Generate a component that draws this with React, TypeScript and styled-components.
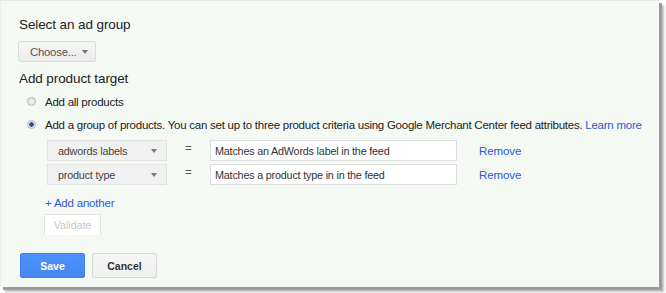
import React from "react";
import styled, { createGlobalStyle } from "styled-components";

const Global = createGlobalStyle`
  html, body { margin: 0; padding: 0; background: #ffffff; }
  body { font-family: Arial, "Liberation Sans", sans-serif; color: #222; }
`;

const Frame = styled.div`
  width: 666px;
  height: 293px;
  background: #fff;
`;

const Panel = styled.div`
  box-sizing: border-box;
  width: 659px;
  height: 287px;
  background: #f5f9f4;
  border-top: 1px solid #e6e9e5;
  border-left: 1px solid #eceeeb;
  box-shadow: 3px 3px 0 0 #9a9a9a, 5px 5px 2px 0 #bdbdbd;
  padding: 15px 0 0 17px;
  display: flex;
  flex-direction: column;
  align-items: flex-start;
`;

const Heading = styled.div<{ $gap?: number }>`
  font-size: 13.5px;
  letter-spacing: -0.1px;
  line-height: 17px;
  color: #222;
  margin: ${(p) => p.$gap ?? 0}px 0 0 1px;
`;

const ChooseButton = styled.div`
  box-sizing: border-box;
  margin-top: 8px;
  width: 78px;
  height: 21px;
  border: 1px solid #dcdcdc;
  border-radius: 2px;
  background: linear-gradient(#f5f5f5, #ededed);
  color: #555;
  font-size: 11.3px;
  letter-spacing: -0.2px;
  display: flex;
  align-items: center;
  padding-left: 11px;
  gap: 5px;
`;

const Arrow = styled.span`
  width: 0;
  height: 0;
  border-left: 3px solid transparent;
  border-right: 3px solid transparent;
  border-top: 4px solid #777;
`;

const Options = styled.div`
  display: flex;
  flex-direction: column;
  align-items: flex-start;
  padding-left: 9px;
  margin-top: 3px;
`;

const OptionRow = styled.label`
  display: flex;
  align-items: center;
  font-size: 11.5px;
  letter-spacing: -0.25px;
  height: 23px;
  color: #222;
  white-space: nowrap;
`;

const Radio = styled.span<{ $on?: boolean }>`
  box-sizing: border-box;
  width: 9px;
  height: 9px;
  border-radius: 50%;
  border: 1px solid #b8b8b8;
  background: ${(p) =>
    p.$on
      ? "radial-gradient(circle, #2a4f9a 0 2px, #dfe5ee 2.5px)"
      : "radial-gradient(circle, #f3f3f3, #dadada)"};
  margin-right: 9px;
`;

const Link = styled.a`
  color: #2a5bd7;
  text-decoration: none;
  cursor: pointer;
`;

const Criteria = styled.div`
  display: flex;
  flex-direction: column;
  gap: 3px;
  padding-left: 20px;
  margin-top: 4px;
`;

const CriteriaRow = styled.div`
  display: flex;
  align-items: center;
  height: 21px;
`;

const Select = styled.div`
  box-sizing: border-box;
  width: 120px;
  height: 21px;
  border: 1px solid #e2e2e2;
  background: #f1f1f1;
  color: #444;
  font-size: 10.8px;
  letter-spacing: -0.2px;
  display: flex;
  align-items: center;
  justify-content: space-between;
  padding: 0 9px 0 10px;
`;

const Equals = styled.span`
  width: 43px;
  text-align: center;
  color: #555;
  font-size: 11px;
  margin-top: -6px;
`;

const Input = styled.div`
  box-sizing: border-box;
  width: 247px;
  height: 21px;
  border: 1px solid #dedede;
  background: #fff;
  color: #333;
  font-size: 10.8px;
  letter-spacing: -0.2px;
  display: flex;
  align-items: center;
  padding-left: 4px;
`;

const Remove = styled(Link)`
  font-size: 11.5px;
  letter-spacing: -0.1px;
  margin-left: 22px;
`;

const AddAnother = styled(Link)`
  font-size: 11.5px;
  letter-spacing: -0.2px;
  line-height: 14px;
  margin: 11px 0 0 18px;
`;

const Validate = styled.div`
  box-sizing: border-box;
  margin: 4px 0 0 17px;
  width: 57px;
  height: 21px;
  border: 1px solid #e4e4e4;
  border-bottom: none;
  border-radius: 2px 2px 0 0;
  background: #fff;
  color: #c8c8c8;
  font-size: 10.6px;
  display: flex;
  align-items: center;
  justify-content: center;
`;

const Actions = styled.div`
  display: flex;
  gap: 7px;
  margin: 18px 0 0 2px;
`;

const Button = styled.div<{ $primary?: boolean }>`
  box-sizing: border-box;
  width: 65px;
  height: 25px;
  border-radius: 2px;
  font-size: 10.5px;
  font-weight: bold;
  display: flex;
  align-items: center;
  justify-content: center;
  border: 1px solid ${(p) => (p.$primary ? "#3f7fe8" : "#d8d8d8")};
  background: ${(p) =>
    p.$primary ? "linear-gradient(#4d90fe, #4787ed)" : "linear-gradient(#f5f5f5, #f0f0f0)"};
  color: ${(p) => (p.$primary ? "#fff" : "#333")};
`;

const rows = [
  { field: "adwords labels", value: "Matches an AdWords label in the feed" },
  { field: "product type", value: "Matches a product type in in the feed" },
];

export default function App() {
  return (
    <Frame>
      <Global />
      <Panel>
        <Heading>Select an ad group</Heading>
        <ChooseButton>
          Choose... <Arrow />
        </ChooseButton>
        <Heading $gap={8}>Add product target</Heading>
        <Options>
          <OptionRow>
            <Radio />
            Add all products
          </OptionRow>
          <OptionRow>
            <Radio $on />
            <span>
              Add a group of products. You can set up to three product criteria using Google Merchant Center feed
              attributes. <Link>Learn more</Link>
            </span>
          </OptionRow>
          <Criteria>
            {rows.map((r) => (
              <CriteriaRow key={r.field}>
                <Select>
                  {r.field}
                  <Arrow />
                </Select>
                <Equals>=</Equals>
                <Input>{r.value}</Input>
                <Remove>Remove</Remove>
              </CriteriaRow>
            ))}
          </Criteria>
          <AddAnother>+ Add another</AddAnother>
          <Validate>Validate</Validate>
        </Options>
        <Actions>
          <Button $primary>Save</Button>
          <Button>Cancel</Button>
        </Actions>
      </Panel>
    </Frame>
  );
}
